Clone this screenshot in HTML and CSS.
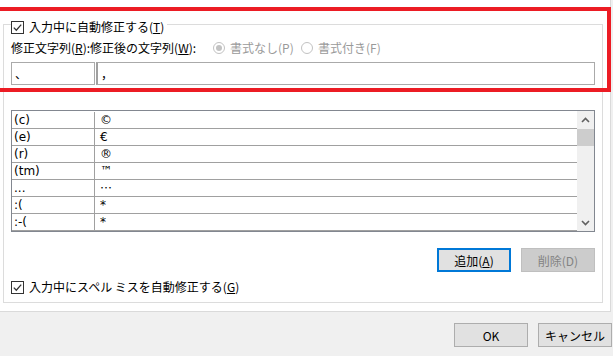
FILE: index.html
```html
<!DOCTYPE html>
<html lang="ja">
<head>
  <meta charset="UTF-8">
  <title>オートコレクト</title>
  <link rel="stylesheet" href="styles.css">
</head>
<body>
  <div class="page">
    <div class="group">
      <div class="caption">
        <span class="check"><svg width="13" height="13" viewBox="0 0 13 13"><rect x="0.5" y="0.5" width="12" height="12" fill="#fff" stroke="#333"/><polyline points="2.8,6.6 5.3,9.2 10.2,3.6" fill="none" stroke="#333" stroke-width="1.3"/></svg></span>
        <span>入力中に自動修正する(<u>T</u>)</span>
      </div>
      <div class="fields">
        <span class="fields-label">修正文字列(<u>R</u>):修正後の文字列(<u>W</u>):</span>
        <span class="option"><span class="radio on"></span><span>書式なし(P)</span></span>
        <span class="option"><span class="radio"></span><span>書式付き(F)</span></span>
      </div>
      <div class="inputs">
        <div class="box from">、</div>
        <div class="box to">，</div>
      </div>
      <div class="list">
        <div class="rows">
          <div class="row"><span class="c1">(c)</span><span class="c2">©</span></div>
          <div class="row"><span class="c1">(e)</span><span class="c2">€</span></div>
          <div class="row"><span class="c1">(r)</span><span class="c2">®</span></div>
          <div class="row"><span class="c1">(tm)</span><span class="c2">™</span></div>
          <div class="row"><span class="c1">...</span><span class="c2 cjk">…</span></div>
          <div class="row"><span class="c1">:(</span><span class="c2">*</span></div>
          <div class="row"><span class="c1">:-(</span><span class="c2">*</span></div>
        </div>
        <div class="scrollbar">
          <div class="arrow"><svg width="9" height="6" viewBox="0 0 9 6"><polyline points="1,5 4.5,1.5 8,5" fill="none" stroke="#606060" stroke-width="1.6"/></svg></div>
          <div class="thumb"></div>
          <div class="track"></div>
          <div class="arrow"><svg width="9" height="6" viewBox="0 0 9 6"><polyline points="1,1 4.5,4.5 8,1" fill="none" stroke="#606060" stroke-width="1.6"/></svg></div>
        </div>
      </div>
      <div class="actions">
        <button class="btn focus">追加(<u>A</u>)</button>
        <button class="btn" disabled>削除(D)</button>
      </div>
      <div class="caption spell">
        <span class="check"><svg width="13" height="13" viewBox="0 0 13 13"><rect x="0.5" y="0.5" width="12" height="12" fill="#fff" stroke="#333"/><polyline points="2.8,6.6 5.3,9.2 10.2,3.6" fill="none" stroke="#333" stroke-width="1.3"/></svg></span>
        <span>入力中にスペル ミスを自動修正する(<u>G</u>)</span>
      </div>
    </div>
  </div>
  <div class="footer">
    <button class="btn">OK</button>
    <button class="btn">キャンセル</button>
  </div>
  <div class="highlight"></div>
</body>
</html>
```

FILE: styles.css
```css
* { box-sizing: border-box; }
body {
  margin: 0; width: 613px; height: 356px; overflow: hidden;
  position: relative; background: #f0f0f0;
  font-family: "Noto Sans CJK JP", sans-serif; font-size: 12px; color: #000;
}
u { text-decoration: underline; text-underline-offset: 1px; }

.page {
  width: 611px; height: 312px;
  background: #fff;
  border-right: 1px solid #dadada; border-bottom: 1px solid #dadada;
  padding: 24px 0 0 3px;
}
.group {
  width: 600px;
  border: 1px solid #dcdcdc;
  padding: 0 7px 7px 7px;
  display: flex; flex-direction: column;
}

.caption {
  display: flex; align-items: center; gap: 5px;
  height: 16px; line-height: 16px;
  margin-top: -6px; padding-right: 3px;
  width: fit-content; background: #fff;
}
.check { display: flex; width: 13px; height: 13px; }
.caption.spell { margin-top: 7px; }

.fields {
  display: flex; align-items: center;
  height: 16px; line-height: 16px; margin-top: 5px;
}
.fields-label { width: 202px; }
.option {
  display: flex; align-items: center; gap: 5px;
  width: 88px; color: #9a9a9a;
}
.radio {
  width: 12px; height: 12px; border-radius: 50%;
  border: 1px solid #c2c2c2; background: #fff;
  display: flex; align-items: center; justify-content: center;
}
.radio.on::after {
  content: ""; width: 6px; height: 6px; border-radius: 50%; background: #c2c2c2;
}

.inputs { display: flex; gap: 1px; margin-top: 6px; height: 23px; }
.box {
  border: 1px solid #aaaaaa; background: #fff;
  line-height: 21px; padding-left: 3px;
}
.box.from { width: 84px; }
.box.to { flex: 1; border-left: 2px solid #a0a0a0; }

.list {
  display: flex; margin-top: 25px;
  height: 122px; border: 1px solid #828790;
}
.rows {
  flex: 1; padding-top: 1px;
  font-family: "DejaVu Sans", sans-serif; font-size: 12px;
}
.row {
  display: flex; height: 17px; line-height: 16px;
  border-bottom: 1px solid #a0a0a0;
}
.c1 { width: 83px; padding-left: 2px; border-right: 1px solid #a0a0a0; }
.c2 { padding-left: 5px; }
.c2.cjk { font-family: "Noto Sans CJK JP", sans-serif; line-height: 15px; }

.scrollbar {
  width: 17px; background: #f0f0f0;
  display: flex; flex-direction: column;
}
.arrow { height: 17px; display: flex; align-items: center; justify-content: center; }
.thumb { height: 17px; margin-top: 1px; background: #cdcdcd; }
.track { flex: 1; }

.actions { display: flex; justify-content: flex-end; gap: 10px; margin-top: 16px; }
.btn {
  width: 74px; height: 24px; padding: 0;
  font: inherit; color: #000;
  background: #e1e1e1; border: 1px solid #adadad;
}
.btn.focus { border: 2px solid #0078d7; }
.btn:disabled { background: #cccccc; border-color: #bfbfbf; color: #838383; }

.footer {
  display: flex; justify-content: flex-end; gap: 10px;
  padding: 11px 1px 0 0;
}

.highlight {
  position: absolute; left: -4px; top: 7px;
  width: 615px; height: 85px;
  border: 4px solid #ec1c24;
}
```
